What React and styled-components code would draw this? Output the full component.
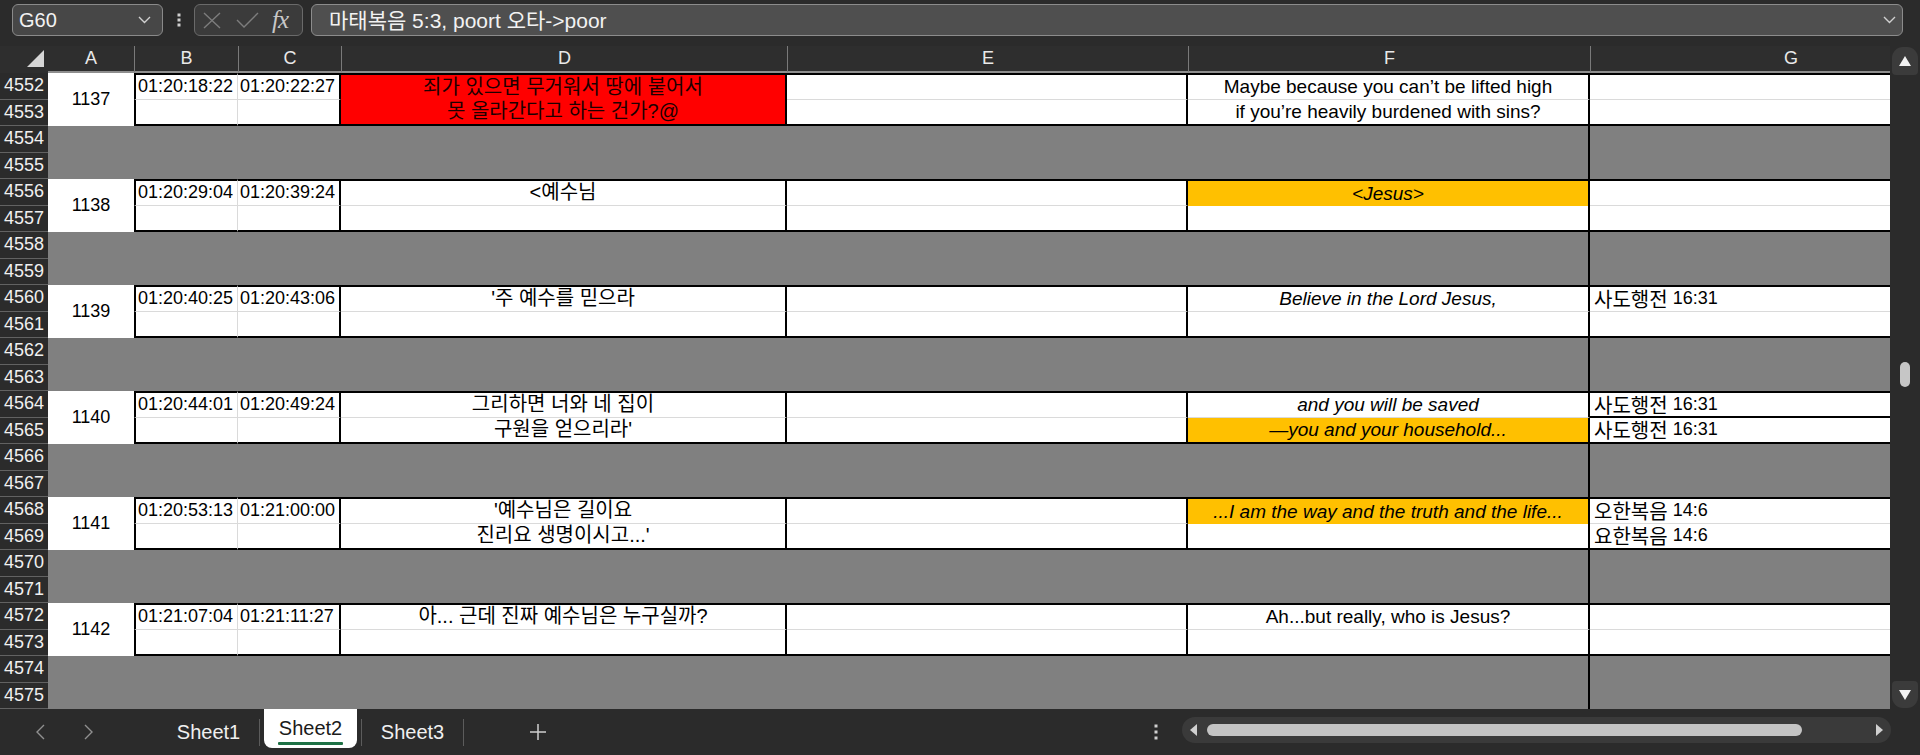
import React from "react";
import styled, { createGlobalStyle } from "styled-components";

const GlobalStyle = createGlobalStyle`
  html, body {
    margin: 0;
    padding: 0;
    background: #2b2b2b;
  }
  body {
    font-family: "Liberation Sans", "Noto Sans CJK KR", sans-serif;
    overflow: hidden;
  }
  * {
    box-sizing: border-box;
  }
`;

const COLS = "48px 86px 104px 103px 446px 401px 402px 401px";
const THICK = "2px solid #000";
const THIN = "1px solid #dadada";
const RED = "#ff0000";
const ORANGE = "#ffc000";
const GREY = "#808080";

const Page = styled.div`
  width: 1920px;
  height: 755px;
  display: flex;
  flex-direction: column;
  background: #2b2b2b;
`;

/* ---------- formula bar ---------- */
const Toolbar = styled.div`
  height: 46px;
  display: flex;
  align-items: flex-start;
  padding: 4px 0 0 12px;
`;

const NameBox = styled.div`
  width: 151px;
  height: 32px;
  background: #474747;
  border: 1px solid #8a8a8a;
  border-radius: 6px;
  display: flex;
  align-items: center;
  justify-content: space-between;
  padding: 0 11px 0 6px;
  color: #f2f2f2;
  font-size: 20px;
`;

const VDots = styled.div`
  width: ${(p) => p.$w || 31}px;
  height: 32px;
  display: flex;
  align-items: center;
  justify-content: center;
`;

const FxBox = styled.div`
  width: 109px;
  height: 32px;
  background: #3b3b3b;
  border: 1px solid #6a6a6a;
  border-radius: 6px;
  display: flex;
  align-items: center;
  padding-left: 8px;
`;

const IconSlot = styled.span`
  display: flex;
  margin-left: ${(p) => p.$ml || 0}px;
`;

const Fx = styled.span`
  margin-left: 13px;
  font-family: "Liberation Serif", serif;
  font-style: italic;
  font-size: 25px;
  color: #c8c8c8;
  letter-spacing: -1px;
`;

const FormulaInput = styled.div`
  margin-left: 8px;
  width: 1592px;
  height: 32px;
  background: #4f4f4f;
  border: 1px solid #8c8c8c;
  border-radius: 6px;
  display: flex;
  align-items: center;
  justify-content: space-between;
  padding: 0 6px 0 17px;
  color: #f2f2f2;
  font-size: 21px;
  line-height: 26px;
`;

const Ko = styled.span`
  font-family: "Noto Sans CJK KR", sans-serif;
  font-size: ${(p) => p.$size || 21}px;
`;

/* ---------- sheet ---------- */
const SheetArea = styled.div`
  height: 663px;
  display: flex;
`;

const GridClip = styled.div`
  width: 1890px;
  overflow: hidden;
  display: flex;
  flex-direction: column;
`;

const HeaderRow = styled.div`
  display: grid;
  grid-template-columns: ${COLS};
  height: 27px;
  background: #2e2e2e;
`;

const Corner = styled.div`
  display: flex;
  align-items: flex-end;
  justify-content: flex-end;
  padding: 0 4px 6px 0;
`;

const ColHead = styled.div`
  display: flex;
  align-items: center;
  justify-content: center;
  color: #e9e9e9;
  font-size: 18px;
  border-left: ${(p) => (p.$first ? "none" : "1px solid #7a7a7a")};
  border-bottom: 2px solid #8e8e8e;
`;

const Body = styled.div`
  display: grid;
  grid-template-columns: ${COLS};
  grid-auto-rows: 26.5px;
`;

const RowLabel = styled.div`
  background: #2b2b2b;
  color: #f0f0f0;
  font-size: 18px;
  display: flex;
  align-items: center;
  justify-content: center;
  border-bottom: 1px solid #626262;
`;

const IdCell = styled.div`
  grid-row: span 2;
  background: #fff;
  color: #000;
  font-size: 18px;
  display: flex;
  align-items: center;
  justify-content: center;
`;

const Cell = styled.div`
  background: ${(p) => p.$fill || "#fff"};
  color: ${(p) => (p.$fill === RED ? "#1c0000" : "#000")};
  display: flex;
  align-items: center;
  justify-content: ${(p) => (p.$left ? "flex-start" : "center")};
  padding-left: ${(p) => (p.$left ? p.$pad || 2 : 0)}px;
  font-size: ${(p) => p.$size || 18}px;
  font-style: ${(p) => (p.$italic ? "italic" : "normal")};
  line-height: 21px;
  white-space: nowrap;
  border-top: ${(p) => (p.$top ? THICK : "none")};
  border-bottom: ${(p) =>
    p.$split === "thick" ? THICK : p.$split === "thin" ? THIN : "none"};
  border-left: ${(p) => (p.$edge ? THICK : "none")};
  border-right: ${(p) =>
    p.$right === "thin" ? THIN : p.$right === "none" ? "none" : THICK};
`;

const GreyBand = styled.div`
  grid-column: span 6;
  background: ${GREY};
  border-right: ${THICK};
`;

const GreyCell = styled.div`
  background: ${GREY};
`;

/* ---------- vertical scrollbar ---------- */
const VScroll = styled.div`
  width: 30px;
  display: flex;
  flex-direction: column;
  align-items: center;
  padding: 1px 2px;
`;

const ScrollBtn = styled.div`
  width: 26px;
  height: ${(p) => (p.$down ? 27 : 28)}px;
  background: #3b3b3b;
  border-radius: ${(p) => (p.$down ? "4px 4px 11px 11px" : "11px 11px 4px 4px")};
  display: flex;
  align-items: center;
  justify-content: center;
`;

const VTrack = styled.div`
  flex: 1;
  width: 100%;
  display: flex;
  justify-content: center;
`;

const VThumb = styled.div`
  width: 10px;
  height: 25px;
  margin-top: ${(p) => p.$offset}px;
  background: #c6c6c6;
  border-radius: 5px;
`;

/* ---------- bottom bar ---------- */
const BottomBar = styled.div`
  height: 46px;
  display: flex;
  align-items: center;
  padding-left: 16px;
  background: #2b2b2b;
`;

const NavBtn = styled.div`
  width: 48px;
  height: 30px;
  display: flex;
  align-items: center;
  justify-content: center;
`;

const Tabs = styled.div`
  margin-left: 50px;
  height: 100%;
  display: flex;
  align-items: center;
`;

const Tab = styled.div`
  width: 93px;
  height: 30px;
  display: flex;
  align-items: center;
  justify-content: center;
  color: #f0f0f0;
  font-size: 20px;
`;

const ActiveTab = styled.div`
  align-self: flex-start;
  width: 93px;
  height: 39px;
  background: #fff;
  border-radius: 0 0 8px 8px;
  display: flex;
  flex-direction: column;
  align-items: center;
  justify-content: flex-end;
  padding-bottom: 3px;
  color: #1b1b1b;
  font-size: 20px;
  line-height: 22px;
`;

const Underline = styled.div`
  width: 65px;
  height: 3px;
  margin-top: 3px;
  background: #1e7145;
  border-radius: 1px;
`;

const TabSep = styled.div`
  width: 1px;
  height: 27px;
  margin: 0 4px;
  background: #5c5c5c;
`;

const AddBtn = styled.div`
  width: 36px;
  height: 30px;
  margin-left: 52px;
  display: flex;
  align-items: center;
  justify-content: center;
`;

const RightGroup = styled.div`
  margin-left: auto;
  height: 100%;
  display: flex;
  align-items: flex-start;
`;

const HTrack = styled.div`
  width: 709px;
  height: 26px;
  margin: 8px 29px 0 13px;
  background: #3a3a3a;
  border-radius: 13px;
  display: flex;
  align-items: center;
  padding: 0 8px;
`;

const HThumb = styled.div`
  width: 595px;
  height: 12px;
  margin-left: 10px;
  margin-right: auto;
  background: #c4c4c4;
  border-radius: 6px;
`;

/* ---------- icons ---------- */
const Chevron = () => (
  <svg width="13" height="8" viewBox="0 0 13 8">
    <path d="M1 1 L6.5 6.5 L12 1" fill="none" stroke="#d0d0d0" strokeWidth="1.4" />
  </svg>
);

const Dots3 = ({ gap = 5 }) => (
  <svg width="4" height={gap * 2 + 4} viewBox={`0 0 4 ${gap * 2 + 4}`}>
    {[0, 1, 2].map((i) => (
      <rect key={i} x="0.5" y={i * gap + 0.5} width="3" height="3" fill="#d0d0d0" />
    ))}
  </svg>
);

const XIcon = () => (
  <svg width="18" height="17" viewBox="0 0 18 17">
    <path d="M1 1 L17 16 M17 1 L1 16" stroke="#7d7d7d" strokeWidth="1.4" fill="none" />
  </svg>
);

const CheckIcon = () => (
  <svg width="23" height="16" viewBox="0 0 23 16">
    <path d="M1 8 L8 15 L22 1" stroke="#7d7d7d" strokeWidth="1.4" fill="none" />
  </svg>
);

const SelectAll = () => (
  <svg width="17" height="17" viewBox="0 0 17 17">
    <polygon points="17,0 17,17 0,17" fill="#d6d6d6" />
  </svg>
);

const Tri = ({ dir }) => {
  const pts = {
    up: "0,10 6,0 12,10",
    down: "0,0 12,0 6,10",
    left: "7,0 7,12 0,6",
    right: "0,0 7,6 0,12",
  }[dir];
  const vertical = dir === "up" || dir === "down";
  return (
    <svg width={vertical ? 12 : 7} height={vertical ? 10 : 12}>
      <polygon points={pts} fill={vertical ? "#f2f2f2" : "#d0d0d0"} strokeLinejoin="round" />
    </svg>
  );
};

const NavArrow = ({ right }) => (
  <svg width="9" height="16" viewBox="0 0 9 16">
    <path
      d={right ? "M1 1 L8 8 L1 15" : "M8 1 L1 8 L8 15"}
      fill="none"
      stroke="#909090"
      strokeWidth="1.4"
    />
  </svg>
);

const Plus = () => (
  <svg width="18" height="18" viewBox="0 0 18 18">
    <path d="M9 1 V17 M1 9 H17" stroke="#cfcfcf" strokeWidth="1.5" />
  </svg>
);

/* ---------- data ---------- */
const groups = [
  {
    row: 4552,
    id: 1137,
    start: "01:20:18:22",
    end: "01:20:22:27",
    d: [
      { text: "죄가 있으면 무거워서 땅에 붙어서", fill: RED },
      { text: "못 올라간다고 하는 건가?@", fill: RED },
    ],
    f: [
      { text: "Maybe because you can’t be lifted high" },
      { text: "if you’re heavily burdened with sins?" },
    ],
    g: [{}, {}],
  },
  {
    row: 4556,
    id: 1138,
    start: "01:20:29:04",
    end: "01:20:39:24",
    d: [{ text: "<예수님" }, {}],
    f: [{ text: "<Jesus>", fill: ORANGE, italic: true }, {}],
    g: [{}, {}],
  },
  {
    row: 4560,
    id: 1139,
    start: "01:20:40:25",
    end: "01:20:43:06",
    d: [{ text: "'주 예수를 믿으라" }, {}],
    f: [{ text: "Believe in the Lord Jesus,", italic: true }, {}],
    g: [{ book: "사도행전", verse: "16:31" }, {}],
  },
  {
    row: 4564,
    id: 1140,
    start: "01:20:44:01",
    end: "01:20:49:24",
    d: [{ text: "그리하면 너와 네 집이" }, { text: "구원을 얻으리라'" }],
    f: [
      { text: "and you will be saved", italic: true },
      { text: "—you and your household...", fill: ORANGE, italic: true },
    ],
    g: [
      { book: "사도행전", verse: "16:31", split: "thick" },
      { book: "사도행전", verse: "16:31" },
    ],
  },
  {
    row: 4568,
    id: 1141,
    start: "01:20:53:13",
    end: "01:21:00:00",
    d: [{ text: "'예수님은 길이요" }, { text: "진리요 생명이시고...'" }],
    f: [
      { text: "...I am the way and the truth and the life...", fill: ORANGE, italic: true },
      {},
    ],
    g: [
      { book: "오한복음", verse: "14:6" },
      { book: "요한복음", verse: "14:6" },
    ],
  },
  {
    row: 4572,
    id: 1142,
    start: "01:21:07:04",
    end: "01:21:11:27",
    d: [{ text: "아... 근데 진짜 예수님은 누구실까?" }, {}],
    f: [{ text: "Ah...but really, who is Jesus?" }, {}],
    g: [{}, {}],
  },
];

function DataRow({ g, i }) {
  const first = i === 0;
  const split = (c) => (first ? (c && c.fill ? "none" : (c && c.split) || "thin") : "thick");
  const d = g.d[i];
  const f = g.f[i];
  const gc = g.g[i];
  return (
    <>
      <Cell $left $edge $top={first} $split={split()} $right="thin">
        {first ? g.start : ""}
      </Cell>
      <Cell $left $top={first} $split={split()}>
        {first ? g.end : ""}
      </Cell>
      <Cell $fill={d.fill} $size={20} $top={first} $split={split(d)}>
        {d.text}
      </Cell>
      <Cell $top={first} $split={split()} />
      <Cell $fill={f.fill} $italic={f.italic} $size={19} $top={first} $split={split(f)}>
        {f.text}
      </Cell>
      <Cell $left $pad={4} $right="none" $top={first} $split={split(gc)}>
        {gc.book && (
          <>
            <Ko $size={20}>{gc.book}</Ko>&nbsp;{gc.verse}
          </>
        )}
      </Cell>
    </>
  );
}

function Group({ g }) {
  return (
    <>
      <RowLabel>{g.row}</RowLabel>
      <IdCell>{g.id}</IdCell>
      <DataRow g={g} i={0} />
      <RowLabel>{g.row + 1}</RowLabel>
      <DataRow g={g} i={1} />
      <RowLabel>{g.row + 2}</RowLabel>
      <GreyBand />
      <GreyCell />
      <RowLabel>{g.row + 3}</RowLabel>
      <GreyBand />
      <GreyCell />
    </>
  );
}

export default function App() {
  return (
    <Page>
      <GlobalStyle />
      <Toolbar>
        <NameBox>
          G60
          <Chevron />
        </NameBox>
        <VDots>
          <Dots3 />
        </VDots>
        <FxBox>
          <IconSlot>
            <XIcon />
          </IconSlot>
          <IconSlot $ml={15}>
            <CheckIcon />
          </IconSlot>
          <Fx>fx</Fx>
        </FxBox>
        <FormulaInput>
          <span>
            <Ko>마태복음</Ko> 5:3, poort <Ko>오타</Ko>-&gt;poor
          </span>
          <Chevron />
        </FormulaInput>
      </Toolbar>

      <SheetArea>
        <GridClip>
          <HeaderRow>
            <Corner>
              <SelectAll />
            </Corner>
            {["A", "B", "C", "D", "E", "F", "G"].map((c, i) => (
              <ColHead key={c} $first={i === 0}>
                {c}
              </ColHead>
            ))}
          </HeaderRow>
          <Body>
            {groups.map((g) => (
              <Group key={g.id} g={g} />
            ))}
          </Body>
        </GridClip>
        <VScroll>
          <ScrollBtn>
            <Tri dir="up" />
          </ScrollBtn>
          <VTrack>
            <VThumb $offset={287} />
          </VTrack>
          <ScrollBtn $down>
            <Tri dir="down" />
          </ScrollBtn>
        </VScroll>
      </SheetArea>

      <BottomBar>
        <NavBtn>
          <NavArrow />
        </NavBtn>
        <NavBtn>
          <NavArrow right />
        </NavBtn>
        <Tabs>
          <Tab>Sheet1</Tab>
          <TabSep />
          <ActiveTab>
            Sheet2
            <Underline />
          </ActiveTab>
          <TabSep />
          <Tab>Sheet3</Tab>
          <TabSep />
        </Tabs>
        <AddBtn>
          <Plus />
        </AddBtn>
        <RightGroup>
          <VDots $w={26} style={{ marginTop: 7 }}>
            <Dots3 gap={6} />
          </VDots>
          <HTrack>
            <Tri dir="left" />
            <HThumb />
            <Tri dir="right" />
          </HTrack>
        </RightGroup>
      </BottomBar>
    </Page>
  );
}
